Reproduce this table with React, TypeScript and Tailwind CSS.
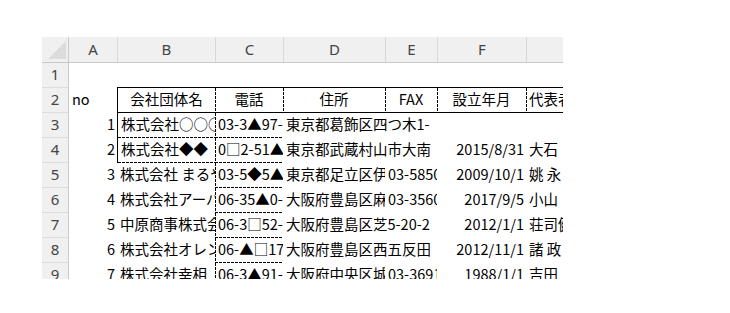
import React from "react";

const DL =
  "[background:repeating-linear-gradient(to_bottom,#000_0_3px,transparent_3px_4px)_left_top/1px_100%_no-repeat]";
const DB =
  "[background:repeating-linear-gradient(to_right,#000_0_3px,transparent_3px_4px)_left_bottom/100%_1px_no-repeat]";
const DLB =
  "[background:repeating-linear-gradient(to_bottom,#000_0_3px,transparent_3px_4px)_left_top/1px_100%_no-repeat,repeating-linear-gradient(to_right,#000_0_3px,transparent_3px_4px)_left_bottom/100%_1px_no-repeat]";

type CellProps = {
  w: string;
  children?: React.ReactNode;
  align?: "left" | "right" | "center";
  clip?: boolean;
  cls?: string;
};

function Cell({ w, children, align = "left", clip = false, cls = "" }: CellProps) {
  const a =
    align === "right"
      ? "justify-end pr-[2px]"
      : align === "center"
      ? "justify-center"
      : "justify-start pl-[3px]";
  return (
    <div
      className={`${w} shrink-0 h-full flex items-center pb-[3px] ${a} ${clip ? "overflow-hidden" : ""} ${cls}`}
    >
      <span className="whitespace-nowrap leading-[20px]">{children}</span>
    </div>
  );
}

function RowHead({ n }: { n: string }) {
  return (
    <div className="w-[27px] shrink-0 h-full bg-[#f0f0f0] border-r border-b border-r-[#c8c8c8] border-b-[#dcdcdc] flex items-center justify-center pb-[1px] text-[#444] font-['Noto_Sans',sans-serif] text-[15px]">
      {n}
    </div>
  );
}

function ColHead({ label, w, cls = "" }: { label: string; w: string; cls?: string }) {
  return (
    <div
      className={`${w} shrink-0 h-full flex items-center justify-center text-[#444] font-['Noto_Sans',sans-serif] text-[15px] ${cls}`}
    >
      {label}
    </div>
  );
}

type RowData = {
  n: string;
  a: string;
  b: string;
  c: string;
  d: string;
  dClip: boolean;
  e: string;
  f: string;
  g: string;
};

const rows: RowData[] = [
  { n: "3", a: "1", b: "株式会社○○○", c: "03-3▲97-", d: "東京都葛飾区四つ木1-", dClip: false, e: "", f: "", g: "" },
  { n: "4", a: "2", b: "株式会社◆◆", c: "0□2-51▲▲", d: "東京都武蔵村山市大南", dClip: false, e: "", f: "2015/8/31", g: "大石" },
  { n: "5", a: "3", b: "株式会社 まるや", c: "03-5◆5▲0", d: "東京都足立区伊興", dClip: true, e: "03-5850", f: "2009/10/1", g: "姚 永" },
  { n: "6", a: "4", b: "株式会社アーバン", c: "06-35▲0-", d: "大阪府豊島区麻布", dClip: true, e: "03-3560", f: "2017/9/5", g: "小山" },
  { n: "7", a: "5", b: "中原商事株式会社", c: "06-3□52-", d: "大阪府豊島区芝5-20-2", dClip: false, e: "", f: "2012/1/1", g: "荘司健" },
  { n: "8", a: "6", b: "株式会社オレンジ", c: "06-▲□17", d: "大阪府豊島区西五反田", dClip: false, e: "", f: "2012/11/1", g: "諸 政" },
  { n: "9", a: "7", b: "株式会社幸相", c: "06-3▲91-", d: "大阪府中央区城見", dClip: true, e: "03-3691", f: "1988/1/1", g: "吉田" },
];

export default function App() {
  return (
    <div className="w-[730px] h-[313px] bg-white pt-[37px] pl-[42px] font-['Noto_Sans_CJK_JP',sans-serif] text-[14.5px] text-black">
      <div className="w-[521px] h-[242px] overflow-hidden bg-white flex flex-col">
        {/* column header */}
        <div className="flex h-[26px] shrink-0 bg-[#f0f0f0] border-b border-[#c8c8c8]">
          <div className="w-[27px] shrink-0 h-full border-r border-[#c8c8c8] flex items-end justify-end">
            <svg width="18" height="18" viewBox="0 0 18 18" className="mb-[3px] mr-[2px]">
              <polygon points="18,0 18,18 0,18" fill="#dcdcdc" />
            </svg>
          </div>
          <ColHead label="A" w="w-[48px]" />
          <ColHead label="B" w="w-[98px]" cls="border-l border-[#d8d8d8]" />
          <ColHead label="C" w="w-[68px]" cls="border-l border-[#d8d8d8]" />
          <ColHead label="D" w="w-[102px]" cls="border-l border-[#d8d8d8]" />
          <ColHead label="E" w="w-[52px]" cls="border-l border-[#d8d8d8]" />
          <ColHead label="F" w="w-[89px]" cls="border-l border-[#d8d8d8]" />
          <ColHead label="G" w="w-[100px]" cls="border-l border-[#d8d8d8]" />
        </div>

        {/* row 1 */}
        <div className="flex h-[25px] shrink-0">
          <RowHead n="1" />
          <Cell w="w-[48px]" />
          <Cell w="w-[98px]" cls="border-b border-black" />
          <Cell w="w-[68px]" cls="border-b border-black" />
          <Cell w="w-[102px]" cls="border-b border-black" />
          <Cell w="w-[52px]" cls="border-b border-black" />
          <Cell w="w-[89px]" cls="border-b border-black" />
          <Cell w="w-[100px]" cls="border-b border-black" />
        </div>

        {/* row 2 */}
        <div className="flex h-[25px] shrink-0">
          <RowHead n="2" />
          <Cell w="w-[48px]">no</Cell>
          <Cell w="w-[98px]" align="center" cls="border-l border-b border-black">
            会社団体名
          </Cell>
          <Cell w="w-[68px]" align="center" cls={`border-b border-black ${DL}`}>
            電話
          </Cell>
          <Cell w="w-[102px]" align="center" cls={`border-b border-black ${DL}`}>
            住所
          </Cell>
          <Cell w="w-[52px]" align="center" cls={`border-b border-black ${DL}`}>
            FAX
          </Cell>
          <Cell w="w-[89px]" align="center" cls={`border-b border-black ${DL}`}>
            設立年月
          </Cell>
          <Cell w="w-[100px]" clip cls={`border-b border-black ${DL}`}>
            代表者名
          </Cell>
        </div>

        {rows.map((r, i) => (
          <div key={r.n} className="flex h-[25px] shrink-0">
            <RowHead n={r.n} />
            <Cell w="w-[48px]" align="right">
              {r.a}
            </Cell>
            <Cell
              w="w-[98px]"
              clip
              cls={i < 2 ? `border-l border-black ${DB}` : ""}
            >
              {r.b}
            </Cell>
            <Cell w="w-[68px]" clip cls={DLB}>
              {r.c}
            </Cell>
            <Cell w="w-[102px]" clip={r.dClip}>
              {r.d}
            </Cell>
            <Cell w="w-[52px]" clip>
              {r.e}
            </Cell>
            <Cell w="w-[89px]" align="right" clip>
              {r.f}
            </Cell>
            <Cell w="w-[100px]" clip>
              {r.g}
            </Cell>
          </div>
        ))}
      </div>
    </div>
  );
}
